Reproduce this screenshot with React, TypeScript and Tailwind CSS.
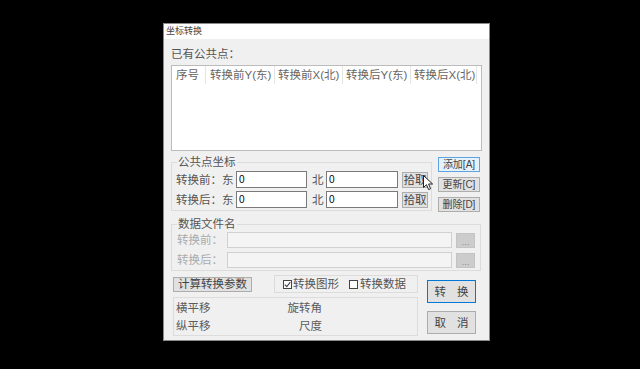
import React from "react";

function Btn({ children, className = "" }: { children: React.ReactNode; className?: string }) {
  return (
    <div className={"flex items-center justify-center bg-[#e1e1e1] border border-[#adadad] text-[#444] whitespace-nowrap " + className}>
      {children}
    </div>
  );
}

function Check({ checked }: { checked: boolean }) {
  return (
    <div className="w-[9px] h-[9px] border border-[#444] bg-white flex items-center justify-center">
      {checked && (
        <svg width="7" height="7" viewBox="0 0 7 7">
          <path d="M0.8 3.6 L2.8 5.6 L6.3 1.2" fill="none" stroke="#444" strokeWidth="1.1" />
        </svg>
      )}
    </div>
  );
}

export default function App() {
  return (
    <div className="w-[640px] h-[369px] bg-black overflow-hidden pl-[163px] pt-[23px] font-['Liberation_Sans','Noto_Sans_CJK_SC',sans-serif] text-[11.5px] leading-[14px] text-[#555]">
      <div className="w-[327px] h-[318px] border border-[#8a8a8a] bg-[#f0f0f0] flex flex-col">
        <div className="h-[15px] bg-white pl-[2px] text-[9px] leading-[15px] text-[#444]">坐标转换</div>
        <div className="pl-[7px] flex flex-col">
          <div className="mt-[8px] h-[14px]">已有公共点：</div>
          <div className="mt-[4px] w-[311px] h-[86px] border border-[#bcbcbc] bg-white">
            <div className="flex h-[18px] leading-[18px] text-[11.5px] text-[#666] whitespace-nowrap">
              <div className="w-[34px] pl-[4px] border-r border-[#e5e5e5] overflow-hidden">序号</div>
              <div className="w-[69px] pl-[4px] border-r border-[#e5e5e5] overflow-hidden">转换前Y(东)</div>
              <div className="w-[68px] pl-[3px] border-r border-[#e5e5e5] overflow-hidden">转换前X(北)</div>
              <div className="w-[68px] pl-[3px] border-r border-[#e5e5e5] overflow-hidden">转换后Y(东)</div>
              <div className="w-[66px] pl-[3px] border-r border-[#e5e5e5] overflow-hidden">转换后X(北)</div>
            </div>
          </div>

          <div className="flex items-start">
            <fieldset className="mt-[4px] w-[261px] border border-[#dcdcdc] pb-[2px]">
              <legend className="ml-[5px] px-[1px] leading-[14px]">公共点坐标</legend>
              <div className="pl-[4px] mt-[2px] flex flex-col gap-[3px]">
                <div className="flex items-center h-[17px]">
                  <span className="w-[60px] whitespace-nowrap">转换前：东</span>
                  <div className="w-[71px] h-[17px] bg-white border border-[#7a7a7a] pl-[2px] text-[10px] leading-[15px] text-black">0</div>
                  <span className="w-[19px] pl-[5px]">北</span>
                  <div className="w-[72px] h-[17px] bg-white border border-[#7a7a7a] pl-[2px] text-[10px] leading-[15px] text-black">0</div>
                  <div className="relative ml-[4px]">
                    <Btn className="w-[26px] h-[16px]">拾取</Btn>
                    <svg className="absolute left-[21px] top-[3px]" width="11" height="16" viewBox="0 0 11 16">
                      <path d="M0.5 0.5 L0.5 12.5 L3.5 9.7 L5.6 14.6 L7.6 13.7 L5.6 9 L9.6 9 Z" fill="white" stroke="#222" strokeWidth="1" strokeLinejoin="round" />
                    </svg>
                  </div>
                </div>
                <div className="flex items-center h-[17px]">
                  <span className="w-[60px] whitespace-nowrap">转换后：东</span>
                  <div className="w-[71px] h-[17px] bg-white border border-[#7a7a7a] pl-[2px] text-[10px] leading-[15px] text-black">0</div>
                  <span className="w-[19px] pl-[5px]">北</span>
                  <div className="w-[72px] h-[17px] bg-white border border-[#7a7a7a] pl-[2px] text-[10px] leading-[15px] text-black">0</div>
                  <Btn className="ml-[4px] w-[26px] h-[16px]">拾取</Btn>
                </div>
              </div>
            </fieldset>
            <div className="ml-[6px] mt-[6px] flex flex-col gap-[5px] text-[10px]">
              <Btn className="w-[42px] h-[15px] !bg-[#e5f1fb] !border-[#5fa3e3]">添加[A]</Btn>
              <Btn className="w-[42px] h-[15px]">更新[C]</Btn>
              <Btn className="w-[42px] h-[15px]">删除[D]</Btn>
            </div>
          </div>

          <fieldset className="mt-[5px] w-[310px] border border-[#dcdcdc] pb-[2px]">
            <legend className="ml-[5px] px-[1px] leading-[14px]">数据文件名</legend>
            <div className="pl-[5px] mt-[1px] flex flex-col gap-[4px]">
              <div className="flex items-center h-[16px]">
                <span className="w-[50px] text-[#ababab]">转换前：</span>
                <div className="w-[225px] h-[16px] bg-[#f4f4f4] border border-[#d0d0d0]" />
                <div className="ml-[4px] w-[19px] h-[15px] bg-[#cccccc] border border-[#c4c4c4] flex items-end justify-center text-[9px] leading-[10px] text-[#8a8a8a]">...</div>
              </div>
              <div className="flex items-center h-[16px]">
                <span className="w-[50px] text-[#ababab]">转换后：</span>
                <div className="w-[225px] h-[16px] bg-[#f4f4f4] border border-[#d0d0d0]" />
                <div className="ml-[4px] w-[19px] h-[15px] bg-[#cccccc] border border-[#c4c4c4] flex items-end justify-center text-[9px] leading-[10px] text-[#8a8a8a]">...</div>
              </div>
            </div>
          </fieldset>

          <div className="mt-[4px] pl-[2px] flex items-start">
            <div className="w-[245px] flex flex-col">
              <div className="flex items-center h-[18px]">
                <Btn className="w-[79px] h-[15px]">计算转换参数</Btn>
                <div className="ml-[22px] w-[144px] h-[18px] border border-[#dcdcdc] flex items-center pl-[8px]">
                  <Check checked={true} />
                  <span className="ml-[1px]">转换图形</span>
                  <div className="ml-[10px]">
                    <Check checked={false} />
                  </div>
                  <span className="ml-[2px]">转换数据</span>
                </div>
              </div>
              <div className="mt-[4px] h-[39px] border border-[#dcdcdc] pl-[2px] text-[#5c5c5c]">
                <div className="w-[146px] h-[19px] flex items-center justify-between">
                  <span>横平移</span>
                  <span>旋转角</span>
                </div>
                <div className="w-[146px] h-[18px] flex items-center justify-between">
                  <span>纵平移</span>
                  <span>尺度</span>
                </div>
              </div>
            </div>
            <div className="ml-[9px] mt-[5px] flex flex-col gap-[8px]">
              <Btn className="w-[49px] h-[23px] !border-[#0078d7] gap-[11px]">
                <span>转</span>
                <span>换</span>
              </Btn>
              <Btn className="w-[49px] h-[23px] gap-[11px]">
                <span>取</span>
                <span>消</span>
              </Btn>
            </div>
          </div>
        </div>
      </div>
    </div>
  );
}
